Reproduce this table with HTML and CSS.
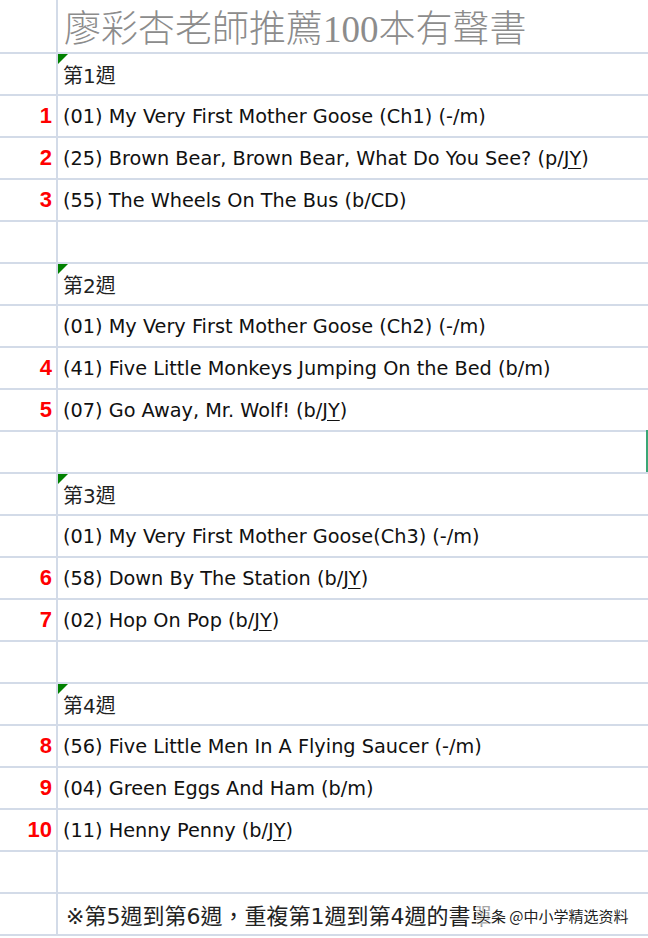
FILE: index.html
```html
<!DOCTYPE html>
<html lang="zh-Hant">
<head>
    <meta charset="UTF-8">
    <title>廖彩杏老師推薦100本有聲書</title>
    <link rel="stylesheet" href="styles.css">
</head>
<body>
    <div class="sheet">
        <div class="num"></div>
        <div class="cell title">廖彩杏老師推薦100本有聲書</div>

        <div class="num"></div>
        <div class="cell week">第1週</div>
        <div class="num">1</div>
        <div class="cell">(01) My Very First Mother Goose (Ch1) (-/m)</div>
        <div class="num">2</div>
        <div class="cell">(25) Brown Bear, Brown Bear, What Do You See? (p/<u>JY</u>)</div>
        <div class="num">3</div>
        <div class="cell">(55) The Wheels On The Bus (b/CD)</div>
        <div class="num"></div>
        <div class="cell"></div>

        <div class="num"></div>
        <div class="cell week">第2週</div>
        <div class="num"></div>
        <div class="cell">(01) My Very First Mother Goose (Ch2) (-/m)</div>
        <div class="num">4</div>
        <div class="cell">(41) Five Little Monkeys Jumping On the Bed (b/m)</div>
        <div class="num">5</div>
        <div class="cell">(07) Go Away, Mr. Wolf! (b/<u>JY</u>)</div>
        <div class="num"></div>
        <div class="cell edge"></div>

        <div class="num"></div>
        <div class="cell week">第3週</div>
        <div class="num"></div>
        <div class="cell">(01) My Very First Mother Goose(Ch3) (-/m)</div>
        <div class="num">6</div>
        <div class="cell">(58) Down By The Station (b/<u>JY</u>)</div>
        <div class="num">7</div>
        <div class="cell">(02) Hop On Pop (b/<u>JY</u>)</div>
        <div class="num"></div>
        <div class="cell"></div>

        <div class="num"></div>
        <div class="cell week">第4週</div>
        <div class="num">8</div>
        <div class="cell">(56) Five Little Men In A Flying Saucer (-/m)</div>
        <div class="num">9</div>
        <div class="cell">(04) Green Eggs And Ham (b/m)</div>
        <div class="num">10</div>
        <div class="cell">(11) Henny Penny (b/<u>JY</u>)</div>
        <div class="num"></div>
        <div class="cell"></div>

        <div class="num"></div>
        <div class="cell note">※第5週到第6週，重複第1週到第4週的書單<span class="mark">头条 @中小学精选资料</span></div>
    </div>
</body>
</html>
```

FILE: styles.css
```css
body {
    margin: 0;
    background: #fff;
    font-family: Tahoma, "DejaVu Sans", "Noto Sans CJK TC", sans-serif;
}
.sheet {
    width: 648px;
    display: grid;
    grid-template-columns: 58px 1fr;
    grid-template-rows: 54px;
    grid-auto-rows: 42px;
}
.num,
.cell {
    box-sizing: border-box;
    border-bottom: 2px solid #d3dbe8;
    display: flex;
    align-items: center;
}
.num {
    border-right: 2px solid #d3dbe8;
    justify-content: flex-end;
    padding-right: 4px;
    color: #ff0000;
    font-family: "Liberation Sans", Arial, sans-serif;
    font-weight: bold;
    font-size: 22px;
}
.cell {
    position: relative;
    padding-left: 5px;
    font-size: 19.3px;
    color: #111;
    white-space: nowrap;
}
.cell u {
    text-underline-offset: 3px;
}
.title {
    padding-left: 6px;
    font-family: "Liberation Serif", "Noto Sans CJK TC", serif;
    font-size: 37px;
    font-weight: 300;
    color: #8c8c8c;
}
.week {
    font-family: "DejaVu Sans", "Noto Sans CJK TC", sans-serif;
    font-size: 20px;
    color: #222;
}
.week::before {
    content: "";
    position: absolute;
    left: 0;
    top: 0;
    border-top: 10px solid #008000;
    border-right: 10px solid transparent;
}
.edge::after {
    content: "";
    position: absolute;
    right: 0;
    top: -2px;
    bottom: 0;
    width: 2px;
    background: #3aa676;
}
.note {
    padding-left: 8px;
    font-family: "DejaVu Sans", "Noto Sans CJK TC", sans-serif;
    font-size: 22px;
    color: #222;
}
.mark {
    position: absolute;
    left: 418px;
    top: 11px;
    font-family: "Noto Sans CJK SC", sans-serif;
    font-size: 15px;
    color: #222;
    background: rgba(255, 255, 255, 0.6);
    text-shadow: 0 0 2px #fff, 0 0 2px #fff;
}
```
